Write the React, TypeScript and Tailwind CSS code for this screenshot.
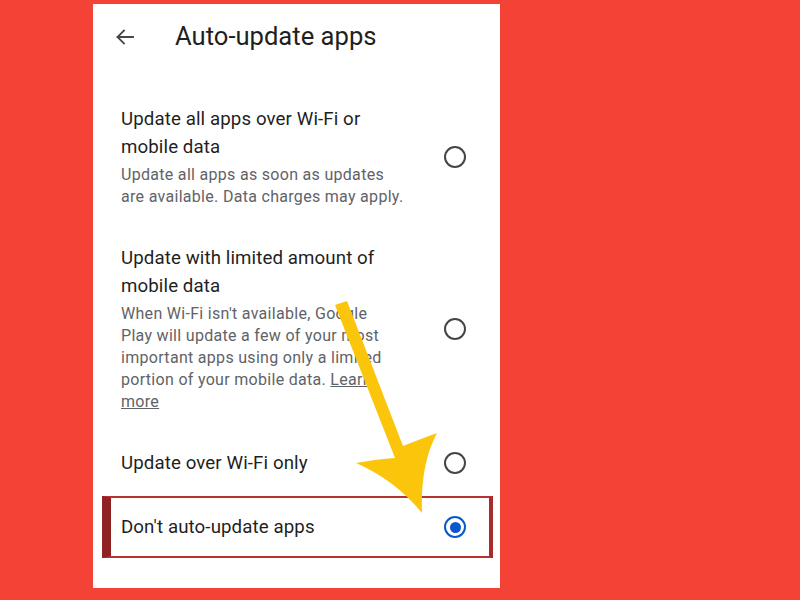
import React from "react";

function Radio({ selected }: { selected?: boolean }) {
  if (selected) {
    return (
      <div className="w-[22px] h-[22px] rounded-full border-[2px] border-[#0b57d0] flex items-center justify-center shrink-0">
        <div className="w-[11px] h-[11px] rounded-full bg-[#0b57d0]" />
      </div>
    );
  }
  return <div className="w-[22px] h-[22px] rounded-full border-[2px] border-[#444746] shrink-0" />;
}

function Option({
  title,
  desc,
  selected,
}: {
  title: React.ReactNode;
  desc?: React.ReactNode;
  selected?: boolean;
}) {
  return (
    <div className="flex items-center justify-between py-[18px] pl-[28px] pr-[34px]">
      <div className="flex flex-col">
        <div className="text-[18.7px] leading-[28px] text-[#1f1f1f] tracking-[0.1px]">{title}</div>
        {desc && (
          <div className="pt-[3px] text-[16px] leading-[22px] text-[#5f6368] tracking-[0.3px] whitespace-nowrap">
            {desc}
          </div>
        )}
      </div>
      <Radio selected={selected} />
    </div>
  );
}

export default function App() {
  return (
    <div
      className="relative w-[800px] h-[600px] bg-[#f44336] overflow-hidden"
      style={{ fontFamily: "Roboto, 'Noto Sans', Arial, sans-serif" }}
    >
      <div className="relative ml-[93px] mt-[4px] w-[407px] h-[584px] bg-white">
        <div className="h-[66px] flex items-center">
          <div className="ml-[20px] w-[24px] h-[24px] flex items-center justify-center">
            <svg width="24" height="24" viewBox="0 0 24 24" fill="none">
              <path d="M20 12H4.5M11 5.5L4.5 12L11 18.5" stroke="#444746" strokeWidth="1.8" strokeLinecap="square" />
            </svg>
          </div>
          <div className="ml-[38px] text-[25.6px] text-[#1f1f1f] leading-none">Auto-update apps</div>
        </div>
        <div className="pt-[17px] flex flex-col">
          <Option
            title={<>Update all apps over Wi-Fi or<br />mobile data</>}
            desc={<>Update all apps as soon as updates<br />are available. Data charges may apply.</>}
          />
          <Option
            title={<>Update with limited amount of<br />mobile data</>}
            desc={
              <>
                When Wi-Fi isn't available, Google
                <br />
                Play will update a few of your most
                <br />
                important apps using only a limited
                <br />
                portion of your mobile data. <span className="underline">Learn</span>
                <br />
                <span className="underline">more</span>
              </>
            }
          />
          <Option title="Update over Wi-Fi only" />
          <Option title="Don't auto-update apps" selected />
        </div>
        <div className="absolute left-[9px] top-[492px] w-[391px] h-[62px] border-[2px] border-[#b83232] border-l-[9px] border-l-[#8f2222] border-r-[4px] border-r-[#a82a2a]" />
      </div>
      <svg className="absolute inset-0 pointer-events-none" width="800" height="600" viewBox="0 0 800 600">
        <path
          d="M 335 305 L 347 301 L 403 446 Q 418 440 437 433 Q 420 465 422 513 Q 395 480 356 463 Q 378 459 395 458 Z"
          fill="#fbc50b"
        />
      </svg>
    </div>
  );
}
